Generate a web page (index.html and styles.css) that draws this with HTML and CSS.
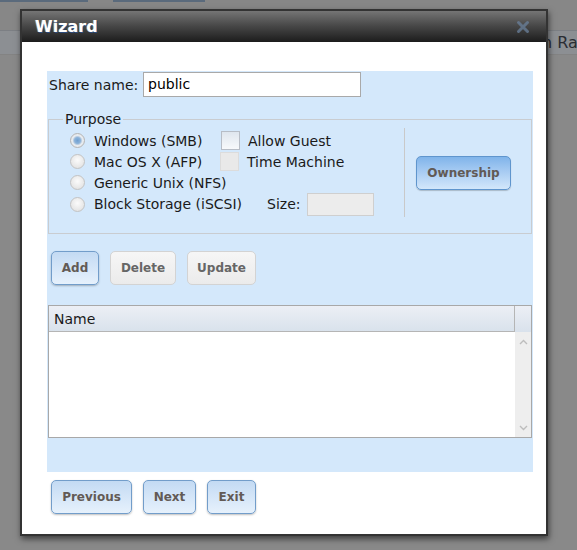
FILE: index.html
```html
<!DOCTYPE html>
<html>
<head>
<meta charset="utf-8">
<link rel="stylesheet" href="styles.css">
</head>
<body>
<div class="page">
  <div class="tabs">
    <span class="tab tab-a"></span>
    <span class="tab tab-b"></span>
  </div>
  <div class="bar">n Ra</div>
</div>

<div class="dialog">
  <div class="titlebar">
    <span class="title">Wizard</span>
    <svg class="close" width="14" height="14" viewBox="0 0 14 14">
      <path d="M2.5 2.5 L11.5 11.5 M11.5 2.5 L2.5 11.5" stroke="#6a819c" stroke-width="3" stroke-linecap="round"/>
    </svg>
  </div>
  <div class="content">
    <div class="panel">
      <div class="share-row">
        <label class="share-label">Share name:</label>
        <div class="text-input">public</div>
      </div>

      <fieldset class="purpose">
        <legend class="legend">Purpose</legend>
        <div class="purpose-inner">
          <div class="options">
            <div class="opt-row">
              <span class="radio checked"></span>
              <span class="opt-label">Windows (SMB)</span>
              <span class="check"></span>
              <span class="check-label">Allow Guest</span>
            </div>
            <div class="opt-row">
              <span class="radio"></span>
              <span class="opt-label">Mac OS X (AFP)</span>
              <span class="check disabled"></span>
              <span class="check-label">Time Machine</span>
            </div>
            <div class="opt-row">
              <span class="radio"></span>
              <span class="opt-label">Generic Unix (NFS)</span>
            </div>
            <div class="opt-row last">
              <span class="radio"></span>
              <span class="opt-label-auto">Block Storage (iSCSI)</span>
              <span class="size-label">Size:</span>
              <span class="size-input"></span>
            </div>
          </div>
          <div class="owner-col">
            <button class="btn btn-strong owner">Ownership</button>
          </div>
        </div>
      </fieldset>

      <div class="actions">
        <button class="btn btn-blue w-add">Add</button>
        <button class="btn btn-gray w-delete">Delete</button>
        <button class="btn btn-gray w-update">Update</button>
      </div>

      <div class="grid">
        <div class="grid-main">
          <div class="grid-head">Name</div>
          <div class="grid-body"></div>
        </div>
        <div class="grid-scroll">
          <div class="scroll-head"></div>
          <div class="scroll-track">
            <svg width="9" height="6" viewBox="0 0 9 6"><path d="M1 5 L4.5 1.5 L8 5" fill="none" stroke="#bdbdbd" stroke-width="1.4"/></svg>
            <svg width="9" height="6" viewBox="0 0 9 6"><path d="M1 1 L4.5 4.5 L8 1" fill="none" stroke="#bdbdbd" stroke-width="1.4"/></svg>
          </div>
        </div>
      </div>
    </div>

    <div class="footer">
      <button class="btn btn-blue w-prev">Previous</button>
      <button class="btn btn-blue w-next">Next</button>
      <button class="btn btn-blue w-exit">Exit</button>
    </div>
  </div>
</div>
</body>
</html>
```

FILE: styles.css
```css
* { box-sizing: border-box; }

html, body {
  margin: 0;
  padding: 0;
}

body {
  width: 577px;
  height: 550px;
  overflow: hidden;
  background: #898989;
  font-family: "DejaVu Sans", Verdana, sans-serif;
  font-size: 14px;
  color: #1a1a1a;
  position: relative;
}

/* background page (dimmed) */
.page {
  height: 550px;
}
.tabs {
  display: flex;
  height: 30px;
  background: #878787;
}
.tab {
  display: block;
  height: 2px;
  background: #5a6a7c;
}
.tab-a { width: 88px; }
.tab-b { width: 92px; margin-left: 25px; }

.bar {
  height: 25px;
  background: #8c8f93;
  border-top: 1px solid #7c7f84;
  border-bottom: 1px solid #838383;
  padding-left: 542px;
  line-height: 24px;
  white-space: nowrap;
  overflow: hidden;
  color: #2a2d33;
  font-size: 16px;
}

/* dialog */
.dialog {
  position: absolute;
  left: 20px;
  top: 9px;
  width: 528px;
  height: 527px;
  border: 2px solid #333;
  background: #fff;
  box-shadow: 1px 3px 6px rgba(0, 0, 0, 0.55);
  display: flex;
  flex-direction: column;
}

.titlebar {
  height: 31px;
  flex: none;
  background: linear-gradient(#757575, #4a4a4a 45%, #262626 88%, #1c1c1c);
  display: flex;
  align-items: center;
  justify-content: space-between;
  padding: 0 16px 0 13px;
}
.title {
  color: #fff;
  font-weight: bold;
  font-size: 16px;
  text-shadow: 1px 1px 0 #2c4a7a, -1px 0 0 rgba(255, 200, 80, 0.35);
}
.close {
  display: block;
  opacity: 0.75;
  filter: blur(0.4px);
}

.content {
  flex: 1;
  padding: 29px 13px 0 25px;
}

.panel {
  background: #d4e8fb;
  height: 401px;
  padding: 1px 0 0 0;
}

.share-row {
  display: flex;
  align-items: center;
  padding-left: 2px;
}
.share-label {
  width: 94px;
}
.text-input {
  width: 218px;
  height: 25px;
  border: 1px solid #a9a9a9;
  background: #fff;
  padding: 0 4px;
  line-height: 23px;
  color: #000;
}

.purpose {
  margin: 14px 1px 0 1px;
  padding: 0;
  border: 1px solid #c9ccd0;
  min-width: 0;
}
.legend {
  margin-left: 14px;
  padding: 0 2px;
  line-height: 17px;
  color: #1a1a1a;
}

.purpose-inner {
  display: flex;
  align-items: flex-start;
}

.options {
  width: 355px;
  padding: 2px 0 18px 21px;
}
.opt-row {
  display: flex;
  align-items: center;
  height: 21px;
}
.opt-row.last {
  height: 22px;
}

.radio {
  width: 15px;
  height: 15px;
  border-radius: 50%;
  border: 1px solid #c3c3c3;
  background: radial-gradient(circle at 50% 40%, #fbfbfb, #e6e6e6 70%, #d8d8d8);
  flex: none;
}
.radio.checked {
  border-color: #b4b4b4;
  background: radial-gradient(circle at 50% 50%, #6f9fd0 0, #8cb3da 3px, #b9cde2 4px, #e6ebf0 5px, #eaeaea);
}

.opt-label {
  margin-left: 9px;
  width: 127px;
  white-space: nowrap;
}
.opt-label-auto {
  margin-left: 9px;
  white-space: nowrap;
}

.check {
  width: 19px;
  height: 19px;
  border: 1px solid #b7bdc6;
  background: linear-gradient(#dfe6ee, #f7f9fb);
  flex: none;
}
.check.disabled {
  border-color: #dcdcdc;
  background: #e9e9e9;
  margin-left: -1px;
}
.check-label {
  margin-left: 8px;
  white-space: nowrap;
}

.size-label {
  margin-left: 25px;
}
.size-input {
  margin-left: 6px;
  width: 67px;
  height: 23px;
  background: #ececec;
  border: 1px solid #cfcfcf;
}

.owner-col {
  flex: 1;
  height: 89px;
  border-left: 1px solid #c9c9c9;
  display: flex;
  align-items: center;
  padding-left: 11px;
}

/* buttons */
.btn {
  font-family: "DejaVu Sans", Verdana, sans-serif;
  font-weight: bold;
  font-size: 12px;
  color: #625a55;
  height: 34px;
  border-radius: 5px;
  padding: 0;
  margin: 0;
  text-align: center;
  cursor: default;
}
.btn-blue {
  border: 1px solid #729dca;
  background: linear-gradient(#c3daf3, #d5e6f8 50%, #e6f1fc);
  box-shadow: 0 1px 2px rgba(0, 0, 0, 0.25);
}
.btn-gray {
  border: 1px solid #d3d3d3;
  background: linear-gradient(#f6f6f6, #ebebeb);
  color: #666;
}
.btn-strong {
  border: 1px solid #5f95cd;
  background: linear-gradient(#80b4ea, #a7cbf2 45%, #d3e7fb);
  box-shadow: 0 1px 1px rgba(0, 0, 0, 0.2);
}
.owner { width: 95px; }

.w-add { width: 48px; }
.w-delete { width: 66px; }
.w-update { width: 69px; }
.w-prev { width: 81px; }
.w-next { width: 53px; }
.w-exit { width: 49px; }

.actions {
  display: flex;
  gap: 11px;
  margin-top: 17px;
  padding-left: 4px;
}

/* grid */
.grid {
  margin: 20px 0 0 1px;
  width: 484px;
  height: 133px;
  border: 1px solid #a8a8a8;
  display: flex;
}
.grid-main {
  flex: 1;
  display: flex;
  flex-direction: column;
}
.grid-head {
  height: 26px;
  background: linear-gradient(#eceff5, #d9e2ec);
  border-right: 1px solid #b5b5b5;
  border-bottom: 1px solid #b5b5b5;
  padding-left: 5px;
  line-height: 27px;
  font-size: 14px;
  color: #1a1a1a;
}
.grid-body {
  flex: 1;
  background: #fff;
}
.grid-scroll {
  width: 16px;
  display: flex;
  flex-direction: column;
}
.scroll-head {
  height: 26px;
  background: linear-gradient(#eceff5, #d9e2ec);
}
.scroll-track {
  flex: 1;
  background: #eeeeee;
  display: flex;
  flex-direction: column;
  justify-content: space-between;
  align-items: center;
  padding: 7px 0 6px;
}
.scroll-track svg { display: block; }

.footer {
  display: flex;
  gap: 11px;
  margin-top: 8px;
  padding-left: 4px;
}
```
